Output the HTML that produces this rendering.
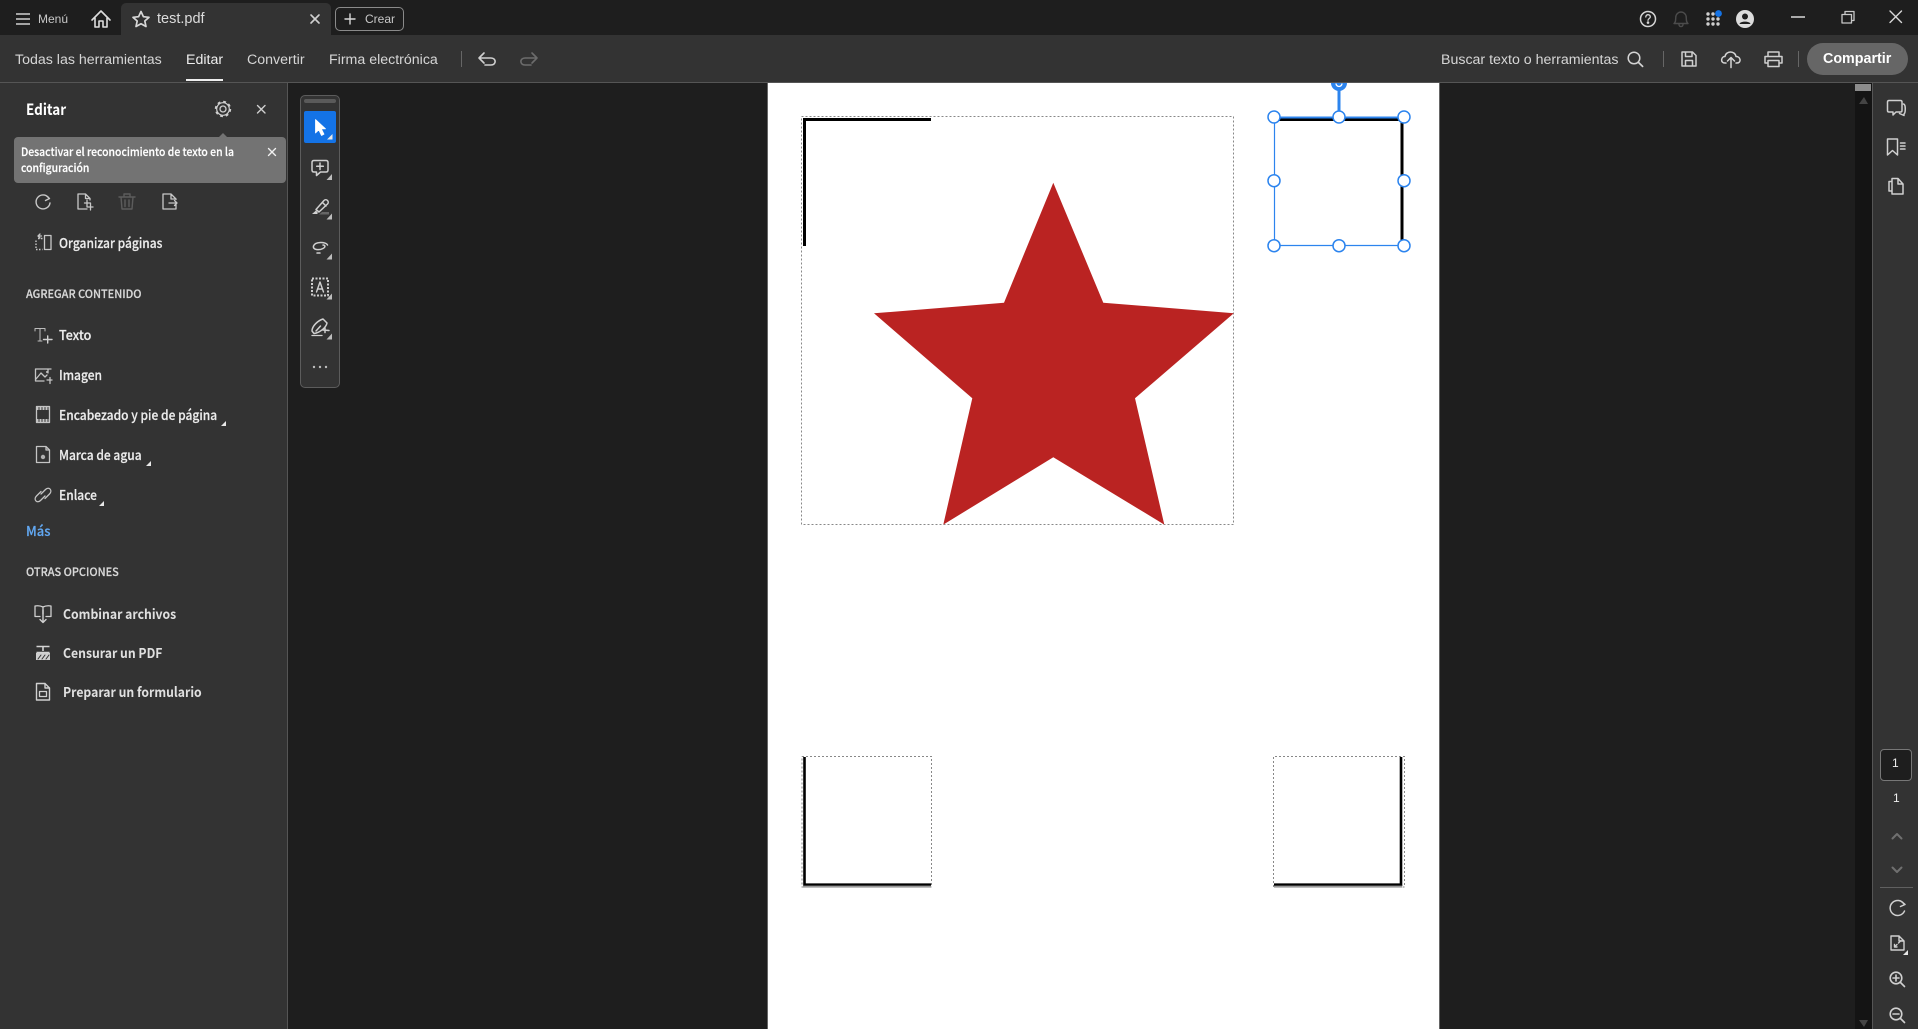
<!DOCTYPE html>
<html lang="es"><head><meta charset="utf-8"><title>test.pdf</title>
<style>
html,body{margin:0;padding:0;width:1918px;height:1029px;overflow:hidden;background:#1e1e1e}
.a{position:absolute}
.t{position:absolute;white-space:nowrap;line-height:20px;height:20px;font-family:"Liberation Sans",sans-serif;color:#d8d8d8}
.s{font-family:"Noto Sans CJK JP","Liberation Sans",sans-serif;color:#ececec;font-size:13.5px;font-weight:500;transform:scaleX(.89);transform-origin:0 50%;-webkit-text-stroke:.2px currentColor}
.b{font-weight:700;-webkit-text-stroke:0}
.h{font-size:11.5px;color:#d8d8d8;transform:scaleX(.95);font-weight:500}
.o{transform:scaleX(.905);color:#e0e0e0}
.n{font-size:11.5px;color:#fff;transform:scaleX(.906)}
.tb{font-size:14.2px;color:#d6d6d6}
svg{position:absolute;left:0;top:0}
</style></head><body>
<div class="a" style="left:0;top:0;width:1918px;height:35px;background:#1e1e1e"></div>
<div class="a" style="left:121px;top:3px;width:210px;height:32px;background:#333;border-radius:5px 5px 0 0"></div>
<div class="a" style="left:335px;top:7px;width:67px;height:22px;border:1px solid #8a8a8a;border-radius:5px"></div>
<div class="a" style="left:0;top:35px;width:1918px;height:47px;background:#333"></div>
<div class="a" style="left:0;top:82px;width:1918px;height:1px;background:#555"></div>
<div class="a" style="left:186px;top:79px;width:37px;height:2px;background:#eee"></div>
<div class="a" style="left:0;top:83px;width:287px;height:946px;background:#333"></div>
<div class="a" style="left:287px;top:83px;width:1px;height:946px;background:#555"></div>
<div class="a" style="left:767px;top:83px;width:671px;height:946px;background:#fff;border-left:1px solid #666;border-right:1px solid #666"></div>
<div class="a" style="left:1855px;top:83px;width:17px;height:946px;background:#141414"></div>
<div class="a" style="left:1855px;top:84px;width:16px;height:7px;background:#8c8c8c"></div>
<div class="a" style="left:1872px;top:83px;width:46px;height:946px;background:#333;border-left:1px solid #555"></div>
<div class="a" style="left:1807px;top:43px;width:101px;height:32px;background:#666;border-radius:16px"></div>
<div class="a" style="left:14px;top:137px;width:272px;height:46px;background:#737373;border-radius:4px"></div>
<div class="a" style="left:300px;top:95px;width:38px;height:291px;background:#333;border:1px solid #5c5c5c;border-radius:5px"></div>
<div class="a" style="left:304px;top:99px;width:32px;height:4px;background:#5a5a5a;border-radius:2px"></div>
<div class="a" style="left:304px;top:111px;width:32px;height:32px;background:#1473e6;border-radius:2px"></div>
<div class="a" style="left:1880px;top:749px;width:30px;height:30px;background:#1e1e1e;border:1px solid #777;border-radius:4px"></div>
<div class="a" style="left:1880px;top:887px;width:33px;height:1px;background:#606060"></div>
<div class="a" style="left:461px;top:51px;width:1px;height:16px;background:#666"></div>
<div class="a" style="left:1663px;top:51px;width:1px;height:16px;background:#666"></div>
<div class="a" style="left:1798px;top:51px;width:1px;height:16px;background:#666"></div>

<svg width="1918" height="1029" viewBox="0 0 1918 1029" fill="none" stroke="#cfcfcf" stroke-width="1.4" stroke-linecap="round" stroke-linejoin="round">
<!-- PDF content -->
<rect x="801.5" y="116.5" width="432" height="408" stroke="#888" stroke-width="1" stroke-dasharray="2 2" stroke-linecap="butt"/>
<path d="M931 119.5H804.5V246" stroke="#000" stroke-width="3" stroke-linecap="butt" stroke-linejoin="miter"/>
<polygon points="1053.3,182.7 1103.3,302.7 1233.8,313.3 1135,398.3 1164.3,524.6 1053.3,457.3 943.3,524.6 972.3,398.3 874,313.3 1004,302.7" fill="#ba2322" stroke="none"/>
<path d="M802 756.5H931.5V887H802V756" stroke="#888" stroke-width="1" stroke-dasharray="2 2" stroke-linecap="butt" stroke-linejoin="miter"/>
<path d="M804.5 757V884.700H931" stroke="#000" stroke-width="2.6" stroke-linecap="butt" stroke-linejoin="miter"/>
<path d="M803 886.600H931" stroke="#999" stroke-width="2" stroke-linecap="butt"/>
<path d="M1273.500 887V756.500H1404.500V887H1273" stroke="#888" stroke-width="1" stroke-dasharray="2 2" stroke-linecap="butt" stroke-linejoin="miter"/>
<path d="M1401 757V884.700H1274" stroke="#000" stroke-width="2.600" stroke-linecap="butt" stroke-linejoin="miter"/>
<path d="M1274 886.600H1402" stroke="#999" stroke-width="2" stroke-linecap="butt"/>
<!-- selected object -->
<path d="M1276 119.5H1402V241" stroke="#000" stroke-width="3" stroke-linecap="butt" stroke-linejoin="miter"/>
<g stroke="#2c84ee">
<path d="M1274.5 117.5H1404" stroke-width="2"/>
<path d="M1274.5 117.5V245.5H1404" stroke-width="1.2"/>
<path d="M1339 83V117" stroke-width="3" stroke-linecap="butt"/>
<path d="M1331 83A8 8 0 0 0 1347 83Z" fill="#2c84ee" stroke="none"/>
<path d="M1336 83.500A3 3 0 0 0 1342 83.500" stroke="#fff" stroke-width="1.3" stroke-linecap="butt"/>
<g fill="#fff" stroke-width="1.5">
<circle cx="1274" cy="117" r="6"/><circle cx="1339" cy="117" r="6"/><circle cx="1404" cy="117" r="6"/>
<circle cx="1274" cy="180.7" r="6"/><circle cx="1404" cy="180.7" r="6"/>
<circle cx="1274" cy="245.7" r="6"/><circle cx="1339" cy="245.7" r="6"/><circle cx="1404" cy="245.7" r="6"/>
</g></g>
<!-- title bar -->
<path d="M16 14H30M16 19H30M16 24H30" stroke="#d0d0d0" stroke-width="1.6" stroke-linecap="butt"/>
<path d="M92 20L101 11L110 20M95 18V27H99V21H103V27H107V18" stroke="#ddd" stroke-width="1.6"/>
<polygon points="141,11.5 143.4,16.7 149,17.3 144.8,21 146,26.5 141,23.7 136,26.5 137.2,21 133,17.3 138.6,16.7" stroke="#d8d8d8" stroke-width="1.7"/>
<path d="M311 15L319 23M319 15L311 23" stroke="#d0d0d0" stroke-width="1.6"/>
<path d="M350 14V24M345 19H355" stroke="#d8d8d8" stroke-width="1.4"/>
<circle cx="1648" cy="19" r="7.5" stroke="#d4d4d4" stroke-width="1.5"/>
<path d="M1645.8 17C1645.8 13.8 1650.4 14 1650.3 17C1650.2 18.5 1648 18.5 1648 20.3" stroke="#d4d4d4" stroke-width="1.3"/>
<circle cx="1648" cy="22.6" r=".6" fill="#d4d4d4" stroke="#d4d4d4"/>
<path d="M1674 23.5C1676 22 1675.5 20 1675.8 17C1676 14 1678.5 12 1681 12C1683.5 12 1686 14 1686.2 17C1686.5 20 1686 22 1688 23.5ZM1679 24.5C1679 27.3 1683 27.3 1683 24.5" stroke="#4c4c4c" stroke-width="1.4"/>
<g fill="#cfcfcf" stroke="none">
<circle cx="1708" cy="14" r="1.7"/><circle cx="1713" cy="14" r="1.7"/>
<circle cx="1708" cy="19" r="1.7"/><circle cx="1713" cy="19" r="1.7"/><circle cx="1718" cy="19" r="1.7"/>
<circle cx="1708" cy="24" r="1.7"/><circle cx="1713" cy="24" r="1.7"/><circle cx="1718" cy="24" r="1.7"/>
<circle cx="1718.5" cy="13.5" r="3.4" fill="#1473e6"/>
<circle cx="1745" cy="19" r="9" fill="#dcdcdc"/>
<circle cx="1745" cy="16.5" r="3" fill="#1e1e1e"/>
<path d="M1739.5 24C1740 20.8 1750 20.8 1750.5 24Z" fill="#1e1e1e"/>
</g>
<path d="M1791 17H1805" stroke="#d8d8d8" stroke-width="1.5" stroke-linecap="butt"/>
<path d="M1842 14.5H1851.5V23H1842ZM1845 14.5V11.5H1854V20.5H1851.5" stroke="#c8c8c8" stroke-width="1.3" stroke-linecap="butt"/>
<path d="M1890 11L1901.5 22.5M1901.5 11L1890 22.5" stroke="#d8d8d8" stroke-width="1.4"/>
<!-- toolbar -->
<path d="M484 53L479 58L484 63M479 58H491C496.5 58 496.5 65 491 65H485" stroke="#d0d0d0" stroke-width="1.6"/>
<path d="M532 53L537 58L532 63M537 58H525C519.5 58 519.5 65 525 65H531" stroke="#6c6c6c" stroke-width="1.6"/>
<circle cx="1634" cy="58" r="5.8" stroke="#d4d4d4" stroke-width="1.5"/>
<path d="M1638.3 62.3L1642.6 66.4" stroke="#d4d4d4" stroke-width="1.7"/>
<path d="M1682 52H1692.5L1696 55.5V66H1682ZM1685.5 52V56.5H1692V52M1685.5 66V60.5H1692.5V66" stroke="#cfcfcf" stroke-width="1.5"/>
<path d="M1726 63H1725C1720 63 1721 56.5 1725 56.5C1726 50.5 1735 50.5 1736 56.5C1741 56.5 1741.5 63 1737 63H1736M1731 67.5V58M1727.5 61L1731 57.5L1734.500 61" stroke="#d4d4d4" stroke-width="1.5"/>
<path d="M1768 56V52H1779V56M1768 63H1765V56.500H1782V63H1779M1768 60.500H1779V66.500H1768Z" stroke="#cfcfcf" stroke-width="1.5"/>
<!-- sidebar top -->
<circle cx="223" cy="109" r="3" stroke="#cfcfcf" stroke-width="1.3"/>
<circle cx="223" cy="109" r="6.300" stroke="#cfcfcf" stroke-width="1.2"/>
<circle cx="223" cy="109" r="7.400" stroke="#cfcfcf" stroke-width="1.6" stroke-dasharray="2.900 2.900" stroke-linecap="butt"/>
<path d="M257.500 105.500L265 113M265 105.500L257.500 113" stroke="#d0d0d0" stroke-width="1.4"/>
<polygon points="219,137 223,133 227,137" fill="#737373" stroke="none"/>
<path d="M268.500 148.500L275.500 155.500M275.500 148.500L268.500 155.500" stroke="#f0f0f0" stroke-width="1.4"/>
<path d="M48.500 197.500A7 7 0 1 0 50 203M46 195.500L49.500 198.500L45.500 200.500" stroke="#c8c8c8" stroke-width="1.4"/>
<path d="M87 209H78V194H85.500L90 198.500V200M85.500 194V198.500H90M87 200V207H93M84.500 203H90.500V210" stroke="#c8c8c8" stroke-width="1.300"/>
<path d="M119 197H135M124 197V194H130V197M121 197L122 209H132L133 197M125 200V206.500M129 200V206.500" stroke="#5c5c5c" stroke-width="1.400"/>
<path d="M176 203V209H163V194H171L176 199V199.500M171 194V199H176M169 203H177M174.500 200.500L177 203L174.500 205.500" stroke="#c8c8c8" stroke-width="1.300"/>
<path d="M36 240.500V249.500H42.500M42.500 238.500H36.500" stroke="#c8c8c8" stroke-width="1.400" stroke-dasharray="1.500 1.500" stroke-linecap="butt"/>
<path d="M41.500 236H38.500M40 234L38 236L40 238M44.500 235.500H51V249.500H44.500Z" stroke="#c8c8c8" stroke-width="1.300"/>
<!-- sidebar add content icons -->
<path d="M35 331V328.500H45V331M40 328.500V341M38 341H42" stroke="#bcbcbc" stroke-width="1"/>
<path d="M43.500 339.500H52M47.700 336V343" stroke="#d0d0d0" stroke-width="1.400"/>
<path d="M50 369H35.500V381H44M36 379L41 373L45 377L47 375M48 373V369H51M52 380H47M50 377.500V383.500" stroke="#c4c4c4" stroke-width="1.300"/>
<circle cx="47" cy="372" r="1" fill="#c4c4c4" stroke="none"/>
<rect x="36.500" y="406.500" width="13" height="16" stroke="#c4c4c4" stroke-width="1.300"/>
<path d="M36.500 408.500H49.500M36.500 420.500H49.500" stroke="#c4c4c4" stroke-width="3" stroke-dasharray="2 1" stroke-linecap="butt"/>
<path d="M36.500 446.500H46L49.500 450V462.500H36.500ZM46 446.500V450H49.500" stroke="#c4c4c4" stroke-width="1.300"/>
<circle cx="43" cy="457" r="2.200" fill="#b0b0b0" stroke="none"/>
<path d="M41 494L45.500 489.500C49 486 53 490.500 49.500 494L45 498.500M45 496L40.500 500.500C37 504 33 499.500 36.500 496L41 491.500" stroke="#c4c4c4" stroke-width="1.300"/>
<path d="M43 610V622M40 619.500L43 622.500L46 619.500" stroke="#d0d0d0" stroke-width="1.400"/>
<path d="M43 607C40 605.500 37.500 605.500 35 606V616.500H40M43 607C46 605.500 48.500 605.500 51 606V616.500H46M43 607V614" stroke="#d0d0d0" stroke-width="1.300"/>
<path d="M36.500 646.500H49.500M43 646.500V651M36.500 652.500H49.500" stroke="#d4d4d4" stroke-width="1.600" stroke-linecap="butt"/>
<rect x="36" y="653" width="14" height="7" fill="#d0d0d0" stroke="none"/>
<path d="M38 659L41 655M42 659L45 655M46 659L49 655" stroke="#333" stroke-width="1"/>
<path d="M36.500 683.500H45L49.500 688V700H36.500ZM45 683.500V688H49.500" stroke="#d0d0d0" stroke-width="1.400"/>
<rect x="39.500" y="691.500" width="7" height="5" stroke="#d0d0d0" stroke-width="1.300"/>
<!-- floating toolbar icons -->
<path d="M315.500 119.500V133L318.800 129.800L321.500 135.500L324 134.200L321.300 128.800H325.500Z" fill="#fff" stroke="#fff" stroke-width=".8"/>
<path d="M314 160.500H326C327.200 160.500 328 161.300 328 162.500V170C328 171.200 327.200 172 326 172H320.500L316.500 175.500V172H314C312.800 172 312 171.200 312 170V162.500C312 161.300 312.800 160.500 314 160.500ZM320 163V169.500M316.700 166.200H323.300" stroke="#d0d0d0" stroke-width="1.500"/>
<path d="M316 209.500L324 200.500C325 199.500 326.500 199.500 327.500 200.500C328.500 201.500 328.500 203 327.500 204L319 212ZM322.500 202.500L326 206" stroke="#d0d0d0" stroke-width="1.500"/>
<path d="M312 214L316 210.500L318 213L317 214Z" fill="#d0d0d0" stroke="none"/>
<path d="M319 214.500H329V212H322Z" fill="#666" stroke="none"/>
<path d="M327.500 245C326 241.500 315 241.500 313.500 246C312.500 250 319 250.500 323 248.500C326 247 325 245 323 245M317 253H320" stroke="#d0d0d0" stroke-width="1.500"/>
<path d="M312 278.500H328V295.500H312Z" stroke="#d0d0d0" stroke-width="2" stroke-dasharray="2 1.500" stroke-linecap="butt"/>
<path d="M316.500 292L320 282L323.500 292M317.500 289H322.500" stroke="#d0d0d0" stroke-width="1.400"/>
<path d="M312 331C312 326 318 320.500 323 319L327 323C326 328 319 333 314 333.500ZM316 331L320.500 326M323 330L329 330.500M325 328V332.500" stroke="#d0d0d0" stroke-width="1.500"/>
<path d="M312 335.500H322" stroke="#d0d0d0" stroke-width="1.300"/>
<g fill="#bcbcbc" stroke="none"><circle cx="314" cy="367" r="1.200"/><circle cx="320" cy="367" r="1.200"/><circle cx="326" cy="367" r="1.200"/></g>
<!-- small triangles -->
<g fill="#e8e8e8" stroke="none">
<polygon points="332.500,134 332.500,139.500 327,139.500"/>
<polygon points="332,174 332,180 326.500,180" fill="#bdbdbd"/>
<polygon points="332,213.500 332,219.500 326.500,219.500" fill="#bdbdbd"/>
<polygon points="332,253.500 332,259.500 326.500,259.500" fill="#bdbdbd"/>
<polygon points="332,293.500 332,299.500 326.500,299.500" fill="#bdbdbd"/>
<polygon points="332,333.500 332,339.500 326.500,339.500" fill="#bdbdbd"/>
<polygon points="226,421 226,426 221,426"/>
<polygon points="151,461 151,466 146,466"/>
<polygon points="104,501 104,506 99,506"/>
<polygon points="1908,950 1908,955 1903,955"/>
</g>
<!-- right panel -->
<polygon points="1859,104 1864,97 1868,104" fill="#444" stroke="none"/>
<polygon points="1859,1020 1864,1027 1868,1020" fill="#444" stroke="none"/>
<path d="M1889 100.500H1900.500C1901.500 100.500 1902 101 1902 102V110.500C1902 111.500 1901.500 112 1900.500 112H1896L1893 115V112H1889C1888 112 1887.500 111.500 1887.500 110.500V102C1887.500 101 1888 100.500 1889 100.500ZM1903.500 104C1906 104.500 1905.500 113 1904 114V115.500L1899.500 113.500" stroke="#d0d0d0" stroke-width="1.500"/>
<path d="M1887.500 139H1897.500V155L1892.500 150.500L1887.500 155ZM1900.500 143H1905M1900.500 146H1905M1900.500 149H1905" stroke="#d0d0d0" stroke-width="1.500"/>
<path d="M1892 181.500H1889V191H1892M1892 178.500V194H1903V184L1898 178.500ZM1898 178.500V184H1903" stroke="#d0d0d0" stroke-width="1.500"/>
<path d="M1892.500 838.500L1897 834L1901.500 838.500" stroke="#707070" stroke-width="2"/>
<path d="M1892.500 867.500L1897 872L1901.500 867.500" stroke="#707070" stroke-width="2"/>
<path d="M1904 904A7.500 7.500 0 1 0 1904.500 911M1901.500 901.500L1905 904.500L1900.500 906.500" stroke="#d0d0d0" stroke-width="1.500"/>
<path d="M1891 936H1899L1904 941V950H1891ZM1899 936V941H1904M1894.500 947L1897 944.500M1894.500 944.500V947H1897M1901 940.500L1898.500 943" stroke="#d0d0d0" stroke-width="1.400"/>
<circle cx="1896" cy="978" r="5.800" stroke="#d0d0d0" stroke-width="1.600"/>
<path d="M1900.500 982.500L1904.500 986.500M1896 975V981M1893 978H1899" stroke="#d0d0d0" stroke-width="1.600"/>
<circle cx="1896" cy="1014" r="5.800" stroke="#d0d0d0" stroke-width="1.600"/>
<path d="M1900.500 1018.500L1904.500 1022.500M1893 1014H1899" stroke="#d0d0d0" stroke-width="1.600"/>
</svg>

<div class="t" style="left:38px;top:9px;font-size:12px;color:#c8c8c8">Menú</div>
<div class="t" style="left:157px;top:9px;font-size:14.5px;color:#dcdcdc">test.pdf</div>
<div class="t" style="left:365px;top:9px;font-size:12px;color:#c8c8c8">Crear</div>
<div class="t tb" style="left:15px;top:50px">Todas las herramientas</div>
<div class="t tb" style="left:186px;top:50px;color:#eee">Editar</div>
<div class="t tb" style="left:247px;top:50px">Convertir</div>
<div class="t tb" style="left:329px;top:50px">Firma electrónica</div>
<div class="t tb" style="left:1441px;top:50px">Buscar texto o herramientas</div>
<div class="t b" style="left:1823px;top:49px;font-size:14.3px;color:#fff">Compartir</div>
<div class="t s b" style="left:26px;top:99px;font-size:15.5px;color:#fff;transform:scaleX(.87)">Editar</div>
<div class="t s n" style="left:21px;top:142px">Desactivar el reconocimiento de texto en la</div>
<div class="t s n" style="left:21px;top:158px">configuración</div>
<div class="t s" style="left:59px;top:232px">Organizar páginas</div>
<div class="t s h" style="left:26px;top:284px">AGREGAR CONTENIDO</div>
<div class="t s" style="left:59px;top:324px;transform:scaleX(.93)">Texto</div>
<div class="t s" style="left:59px;top:364px">Imagen</div>
<div class="t s" style="left:59px;top:404px">Encabezado y pie de página</div>
<div class="t s" style="left:59px;top:444px">Marca de agua</div>
<div class="t s" style="left:59px;top:484px">Enlace</div>
<div class="t s" style="left:26px;top:520px;color:#62a8f2;transform:scaleX(.96)">Más</div>
<div class="t s h" style="left:26px;top:562px">OTRAS OPCIONES</div>
<div class="t s b o" style="left:63px;top:603px">Combinar archivos</div>
<div class="t s b o" style="left:63px;top:642px">Censurar un PDF</div>
<div class="t s b o" style="left:63px;top:681px">Preparar un formulario</div>
<div class="t" style="left:1892px;top:753px;font-size:12px;color:#eee">1</div>
<div class="t" style="left:1893px;top:788px;font-size:12px;color:#eee">1</div>
</body></html>
